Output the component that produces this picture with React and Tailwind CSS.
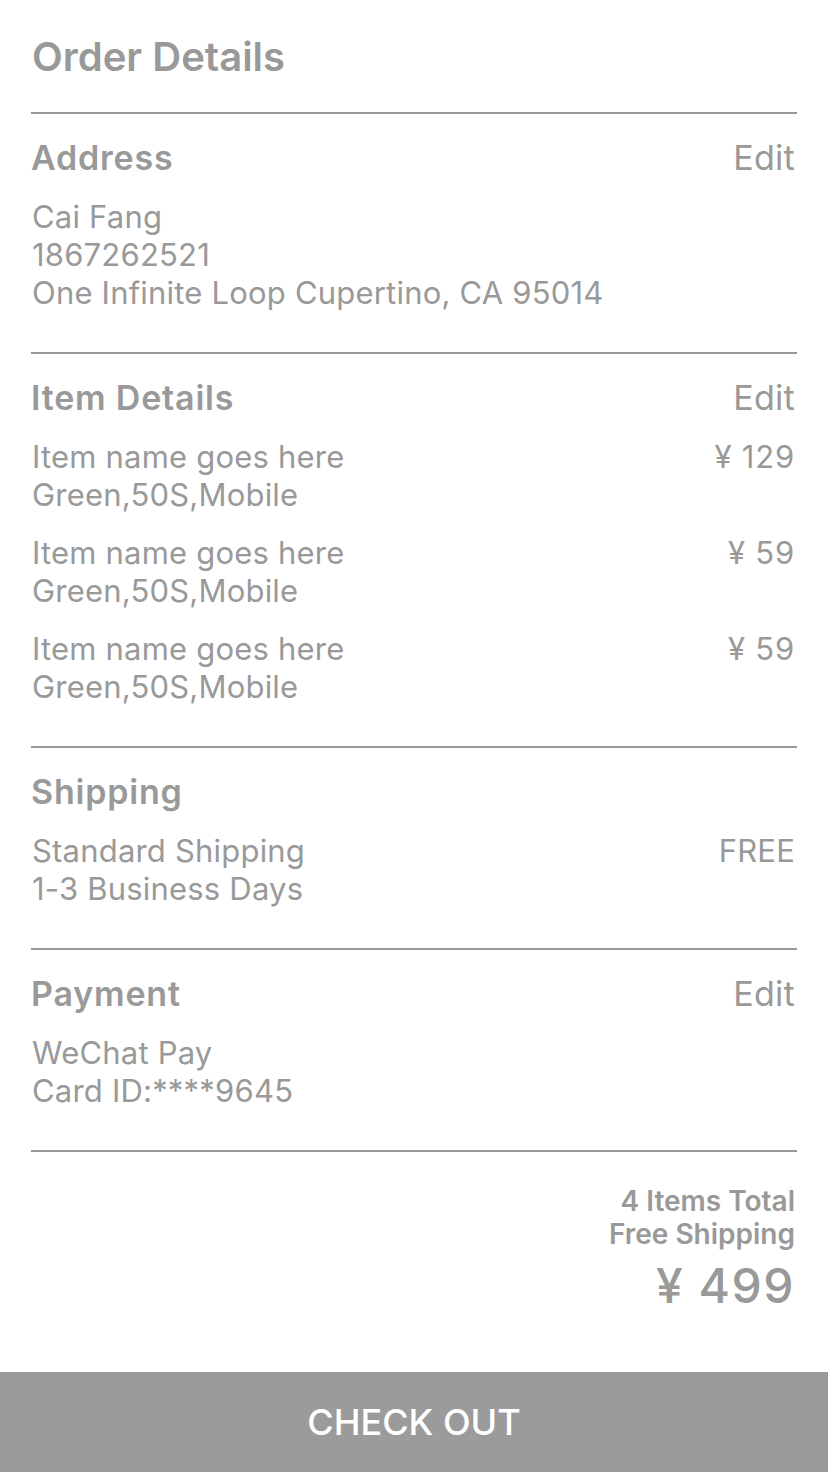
import React from 'react';

const items = [
  { name: 'Item name goes here', spec: 'Green,50S,Mobile', price: '¥ 129' },
  { name: 'Item name goes here', spec: 'Green,50S,Mobile', price: '¥ 59' },
  { name: 'Item name goes here', spec: 'Green,50S,Mobile', price: '¥ 59' },
];

const Section = ({ title, action, children }) => (
  <div className="border-t-2 border-[#999999] pt-[24px] pb-[40px]">
    <div className="flex justify-between items-center h-[38px]">
      <h2 className="text-[34px] font-semibold tracking-[0.8px]">{title}</h2>
      {action && <span className="text-[34px] pr-[2px] tracking-[0.3px]">{action}</span>}
    </div>
    <div className="mt-[22px]">{children}</div>
  </div>
);

const App = () => {
  return (
    <div
      className="w-[828px] h-[1472px] bg-white text-[#999999] flex flex-col"
      style={{ fontFamily: 'Inter, "Noto Sans", sans-serif' }}
    >
      <div className="flex-1 px-[31px]">
        <h1 className="pl-px pt-[32px] pb-[30px] text-[40px] leading-[50px] font-semibold">Order Details</h1>

        <Section title="Address" action="Edit">
          <div className="text-[31px] leading-[38px] pl-px tracking-[0.2px]">
            <p>Cai Fang</p>
            <p>1867262521</p>
            <p>One Infinite Loop Cupertino, CA 95014</p>
          </div>
        </Section>

        <Section title="Item Details" action="Edit">
          <div className="flex flex-col gap-[20px] text-[31px] leading-[38px] pl-px tracking-[0.2px]">
            {items.map((item, i) => (
              <div key={i} className="flex justify-between">
                <div>
                  <p>{item.name}</p>
                  <p>{item.spec}</p>
                </div>
                <span className="pr-[2px] tracking-[0.8px]">{item.price}</span>
              </div>
            ))}
          </div>
        </Section>

        <Section title="Shipping">
          <div className="flex justify-between text-[31px] leading-[38px] pl-px tracking-[0.2px]">
            <div>
              <p>Standard Shipping</p>
              <p>1-3 Business Days</p>
            </div>
            <span className="pr-[2px]">FREE</span>
          </div>
        </Section>

        <Section title="Payment" action="Edit">
          <div className="text-[31px] leading-[38px] pl-px tracking-[0.2px]">
            <p>WeChat Pay</p>
            <p>Card ID:****9645</p>
          </div>
        </Section>

        <div className="border-t-2 border-[#999999] pt-[33px] flex flex-col items-end pr-[2px]">
          <p className="text-[28px] leading-[33px] font-semibold">4 Items Total</p>
          <p className="text-[28px] leading-[33px] font-semibold">Free Shipping</p>
          <p className="mt-[5px] text-[48px] leading-[60px] font-medium tracking-[1.5px]">¥ 499</p>
        </div>
      </div>

      <button className="h-[100px] w-full bg-[#9b9b9b] text-white text-[36px] font-medium">
        CHECK OUT
      </button>
    </div>
  );
};

export default App;
